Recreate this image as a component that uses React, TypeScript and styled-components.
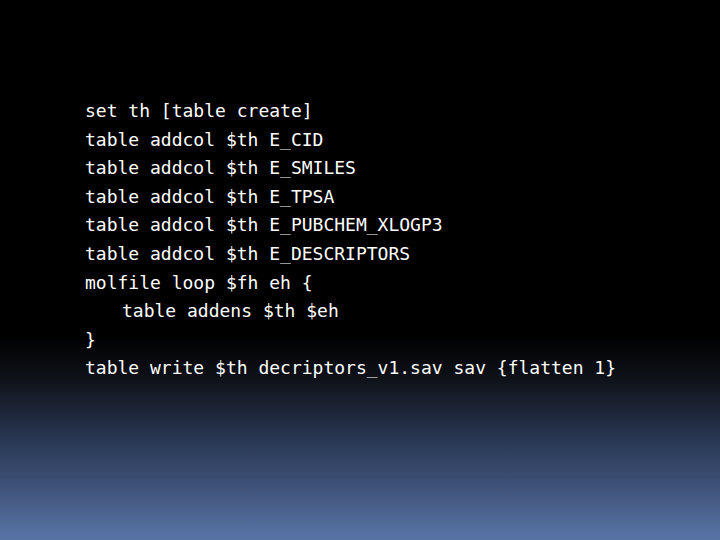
import React from "react";
import styled, { createGlobalStyle } from "styled-components";

const Global = createGlobalStyle`
  html, body { margin: 0; padding: 0; }
  body { width: 720px; height: 540px; overflow: hidden; background: #000; }
`;

const Slide = styled.div`
  width: 720px;
  height: 540px;
  box-sizing: border-box;
  padding: 97px 0 0 85px;
  background: linear-gradient(
    to bottom,
    #000 0%,
    #000 62%,
    #0e1118 70%,
    #26334d 80%,
    #3e5278 90%,
    #5874a6 100%
  );
`;

const Code = styled.div`
  display: flex;
  flex-direction: column;
  font-family: "DejaVu Sans Mono", "Liberation Mono", monospace;
  font-size: 18px;
  line-height: 28.6px;
  color: #ffffff;
  white-space: pre;
`;

const Line = styled.div<{ $indent?: boolean }>`
  padding-left: ${(p) => (p.$indent ? "37px" : "0")};
`;

const lines: { text: string; indent?: boolean }[] = [
  { text: "set th [table create]" },
  { text: "table addcol $th E_CID" },
  { text: "table addcol $th E_SMILES" },
  { text: "table addcol $th E_TPSA" },
  { text: "table addcol $th E_PUBCHEM_XLOGP3" },
  { text: "table addcol $th E_DESCRIPTORS" },
  { text: "molfile loop $fh eh {" },
  { text: "table addens $th $eh", indent: true },
  { text: "}" },
  { text: "table write $th decriptors_v1.sav sav {flatten 1}" },
];

export default function App() {
  return (
    <>
      <Global />
      <Slide>
        <Code>
          {lines.map((l, i) => (
            <Line key={i} $indent={l.indent}>
              {l.text}
            </Line>
          ))}
        </Code>
      </Slide>
    </>
  );
}
